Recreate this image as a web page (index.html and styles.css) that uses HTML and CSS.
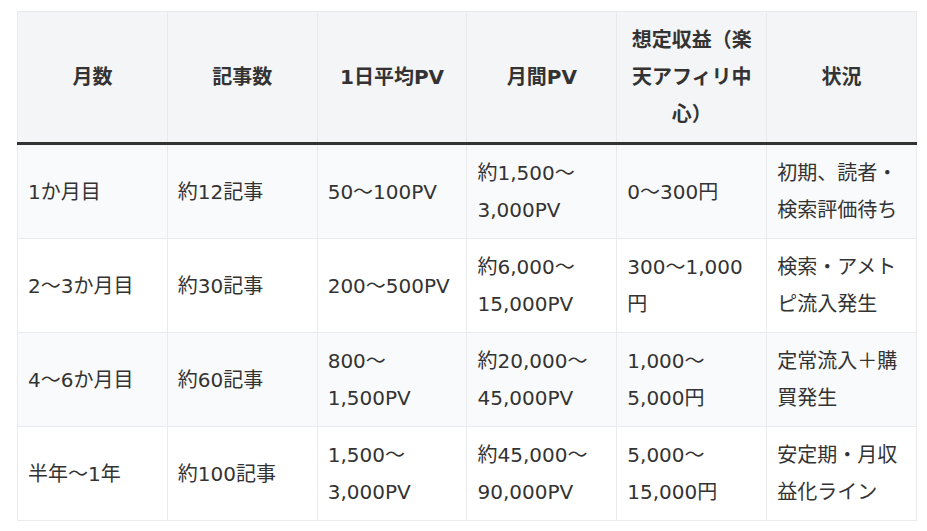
FILE: index.html
```html
<!DOCTYPE html>
<html lang="ja">
<head>
<meta charset="utf-8">
<link rel="stylesheet" href="styles.css">
</head>
<body>
<div class="wrap">
<table class="plan">
  <thead>
    <tr>
      <th>月数</th>
      <th>記事数</th>
      <th>1日平均PV</th>
      <th>月間PV</th>
      <th>想定収益（楽天アフィリ中心）</th>
      <th>状況</th>
    </tr>
  </thead>
  <tbody>
    <tr>
      <td>1か月目</td>
      <td>約12記事</td>
      <td>50〜100PV</td>
      <td>約1,500〜3,000PV</td>
      <td>0〜300円</td>
      <td>初期、読者・検索評価待ち</td>
    </tr>
    <tr>
      <td>2〜3か月目</td>
      <td>約30記事</td>
      <td>200〜500PV</td>
      <td>約6,000〜15,000PV</td>
      <td>300〜1,000円</td>
      <td>検索・アメトピ流入発生</td>
    </tr>
    <tr>
      <td>4〜6か月目</td>
      <td>約60記事</td>
      <td>800〜1,500PV</td>
      <td>約20,000〜45,000PV</td>
      <td>1,000〜5,000円</td>
      <td>定常流入＋購買発生</td>
    </tr>
    <tr>
      <td>半年〜1年</td>
      <td>約100記事</td>
      <td>1,500〜3,000PV</td>
      <td>約45,000〜90,000PV</td>
      <td>5,000〜15,000円</td>
      <td>安定期・月収益化ライン</td>
    </tr>
  </tbody>
</table>
</div>
</body>
</html>
```

FILE: styles.css
```css
html, body {
  margin: 0;
  padding: 0;
  background: #ffffff;
}
.wrap {
  padding: 11px 0 0 17px;
}
.plan {
  border-collapse: collapse;
  table-layout: fixed;
  width: 900px;
  font-family: "DejaVu Sans", "Noto Sans CJK JP", sans-serif;
  font-size: 20px;
  line-height: 37px;
  color: #333333;
}
.plan th,
.plan td {
  border: 1px solid #e9eaec;
  padding: 10px 10px 9px 10px;
  vertical-align: middle;
}
.plan th {
  background: #f4f5f7;
  font-weight: 700;
  text-align: center;
  border-bottom: 3px solid #333333;
}
.plan td {
  text-align: left;
  font-weight: 400;
}
.plan tbody tr:nth-child(odd) td {
  background: #f9fafc;
}
.plan tbody tr:nth-child(even) td {
  background: #ffffff;
}
```
